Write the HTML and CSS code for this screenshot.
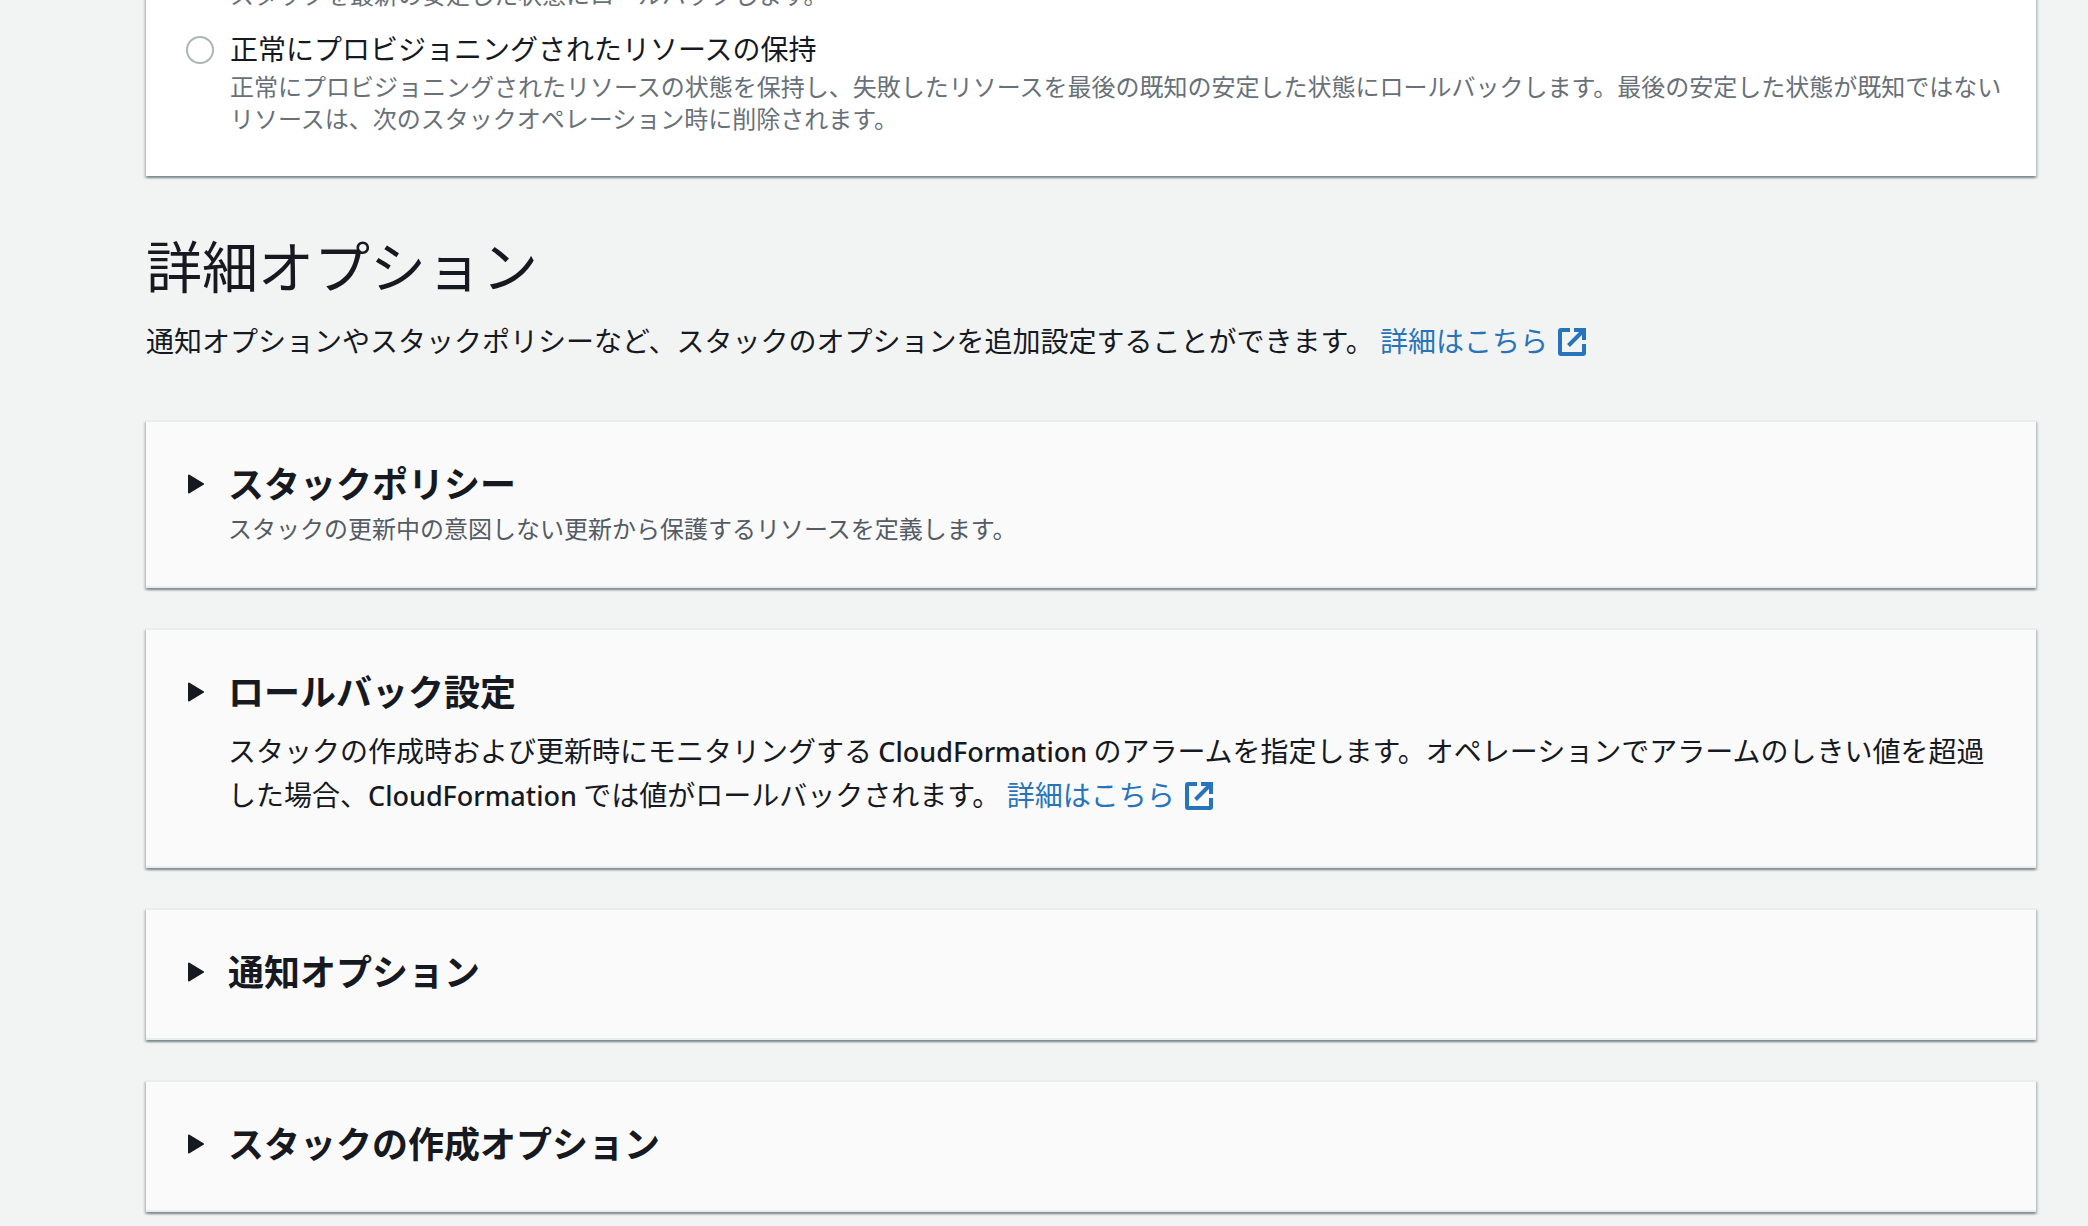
FILE: index.html
```html
<!DOCTYPE html>
<html lang="ja">
<head>
<meta charset="utf-8">
<meta name="viewport" content="width=device-width, initial-scale=1">
<title>スタックオプションの設定</title>
<link rel="stylesheet" href="styles.css">
</head>
<body>
<svg class="sprite" aria-hidden="true">
  <symbol id="external" viewBox="0 0 28 28">
    <path d="M12 2H3Q2 2 2 3V25Q2 26 3 26H25Q26 26 26 25V16M16 2H26V12M10.5 17.5L25 3" fill="none" stroke="currentColor" stroke-width="4"/>
  </symbol>
  <symbol id="caret" viewBox="0 0 16 20">
    <path d="M1 1.500L15 10L1 18.500Z" fill="currentColor" stroke="currentColor" stroke-width="2" stroke-linejoin="round"/>
  </symbol>
</svg>
<main class="page">
  <section class="card card-options">
    <div class="option">
      <input class="radio" type="radio" name="failure" id="rollback">
      <div>
        <label class="option-label" for="rollback">すべてのスタックリソースをロールバックする</label>
        <p class="hint">スタックを最新の安定した状態にロールバックします。</p>
      </div>
    </div>
    <div class="option">
      <input class="radio" type="radio" name="failure" id="preserve">
      <div>
        <label class="option-label" for="preserve">正常にプロビジョニングされたリソースの保持</label>
        <p class="hint">正常にプロビジョニングされたリソースの状態を保持し、失敗したリソースを最後の既知の安定した状態にロールバックします。最後の安定した状態が既知ではないリソースは、次のスタックオペレーション時に削除されます。</p>
      </div>
    </div>
  </section>

  <header class="intro">
    <h1 class="page-title">詳細オプション</h1>
    <p class="text">通知オプションやスタックポリシーなど、スタックのオプションを追加設定することができます。 <a class="link" href="#">詳細はこちら<svg class="external" aria-hidden="true"><use href="#external"/></svg></a></p>
  </header>

  <div class="sections">
    <section class="card panel">
      <h2><button class="toggle" type="button" aria-expanded="false"><svg class="caret" aria-hidden="true"><use href="#caret"/></svg>スタックポリシー</button></h2>
      <p class="panel-hint">スタックの更新中の意図しない更新から保護するリソースを定義します。</p>
    </section>
    <section class="card panel">
      <h2><button class="toggle" type="button" aria-expanded="false"><svg class="caret" aria-hidden="true"><use href="#caret"/></svg>ロールバック設定</button></h2>
      <p class="text panel-text">スタックの作成時および更新時にモニタリングする <span class="latin">CloudFormation</span> のアラームを指定します。オペレーションでアラームのしきい値を超過した場合、<span class="latin">CloudFormation</span> では値がロールバックされます。 <a class="link" href="#">詳細はこちら<svg class="external" aria-hidden="true"><use href="#external"/></svg></a></p>
    </section>
    <section class="card panel">
      <h2><button class="toggle" type="button" aria-expanded="false"><svg class="caret" aria-hidden="true"><use href="#caret"/></svg>通知オプション</button></h2>
    </section>
    <section class="card panel">
      <h2><button class="toggle" type="button" aria-expanded="false"><svg class="caret" aria-hidden="true"><use href="#caret"/></svg>スタックの作成オプション</button></h2>
    </section>
  </div>
</main>
</body>
</html>
```
FILE: styles.css
```css
* { box-sizing: border-box; }

html { background: #f2f4f4; }

body {
  display: flow-root;
  margin: 0;
  color: #16191f;
  font-family: "Noto Sans CJK JP", sans-serif;
  font-size: 28px;
  line-height: 44px;
}

h1, h2, p { margin: 0; }

.sprite { display: none; }

.page {
  margin: -66px 52px 0 146px;
  padding-bottom: 14px;
}

.card {
  box-shadow: 0 2px 2px 0 rgba(0, 28, 36, .3),
              2px 2px 2px 0 rgba(0, 28, 36, .15),
              -2px 2px 2px 0 rgba(0, 28, 36, .15);
}

.card-options {
  display: grid;
  gap: 16px;
  padding: 0 28px 42px 40px;
  background: #fff;
}

.option {
  display: grid;
  grid-template-columns: 28px 1fr;
  column-gap: 16px;
}

.radio {
  appearance: none;
  width: 28px;
  height: 28px;
  margin: 10px 0;
  border: 2px solid #aab7b8;
  border-radius: 50%;
  background: #fff;
}

.option-label { display: block; }

.hint {
  color: #687078;
  font-size: 24px;
  line-height: 32px;
}

.intro { padding: 54px 0 58px; }

.page-title {
  margin-bottom: 20px;
  font-size: 56px;
  font-weight: 400;
  line-height: 68px;
}

.link {
  color: #2874bb;
  text-decoration: none;
  white-space: nowrap;
}

.external {
  width: 28px;
  height: 28px;
  margin-left: 10px;
  vertical-align: -4px;
}

.latin {
  font-family: "Noto Sans", sans-serif;
  font-size: 27px;
  font-weight: 500;
  line-height: 1;
}

.sections {
  display: grid;
  gap: 40px;
}

.panel {
  padding: 38px 40px 42px 42px;
  border: solid #eaeded;
  border-width: 2px 0;
  background: #fafafa;
}

.toggle {
  display: flex;
  align-items: center;
  gap: 24px;
  width: 100%;
  margin-bottom: 4px;
  padding: 0;
  border: 0;
  background: none;
  color: inherit;
  font-family: inherit;
  font-size: 36px;
  font-weight: 700;
  line-height: 44px;
  text-align: left;
}

.caret {
  width: 16px;
  height: 20px;
  margin-top: 4px;
}

.panel-hint {
  padding: 4px 0 0 40px;
  color: #545b64;
  font-size: 24px;
  line-height: 32px;
}

.panel-text { padding: 12px 0 8px 40px; }
```
